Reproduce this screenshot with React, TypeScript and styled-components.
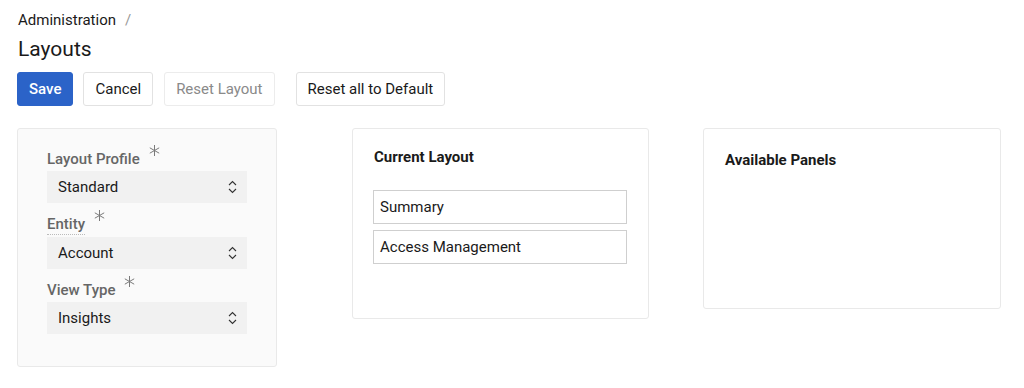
import React from "react";
import styled, { createGlobalStyle } from "styled-components";

const GlobalStyle = createGlobalStyle`
  body {
    margin: 0;
    background: #ffffff;
    font-family: Roboto, "Liberation Sans", Arial, sans-serif;
    color: #1a1a1a;
  }
`;

const Page = styled.div`
  padding: 10px 17px 0 17px;
`;

const Breadcrumb = styled.div`
  display: flex;
  gap: 9px;
  font-size: 15px;
  line-height: 20px;
  padding-left: 1px;
`;

const Slash = styled.span`
  color: #999;
`;

const Title = styled.h1`
  margin: 5px 0 0 0;
  font-size: 21px;
  font-weight: 400;
  line-height: 28px;
  padding-left: 1px;
`;

const Toolbar = styled.div`
  display: flex;
  align-items: center;
  margin-top: 9px;
`;

const Button = styled.button<{ $primary?: boolean; $gap?: number }>`
  height: 34px;
  padding: 0 11px;
  margin-right: ${(p) => p.$gap ?? 10}px;
  border-radius: 3px;
  font-family: Roboto, "Liberation Sans", Arial, sans-serif;
  font-size: 15px;
  font-weight: ${(p) => (p.$primary ? 500 : 400)};
  background: ${(p) => (p.$primary ? "#2b63c8" : "#ffffff")};
  color: ${(p) => (p.$primary ? "#ffffff" : "#1a1a1a")};
  border: 1px solid ${(p) => (p.$primary ? "#2b63c8" : "#e2e2e2")};
  &:disabled {
    color: #8a8a8a;
    border-color: #ececec;
  }
`;

const Panels = styled.div`
  display: flex;
  align-items: flex-start;
  margin-top: 22px;
`;

const Card = styled.div<{ $width: number; $height: number; $muted?: boolean; $offset?: number }>`
  box-sizing: border-box;
  width: ${(p) => p.$width}px;
  height: ${(p) => p.$height}px;
  margin-left: ${(p) => p.$offset ?? 0}px;
  background: ${(p) => (p.$muted ? "#fafafa" : "#ffffff")};
  border: 1px solid #e9e9e9;
  border-radius: 3px;
`;

const FormBody = styled.div`
  padding: 9px 29px 0 29px;
`;

const Label = styled.div`
  display: flex;
  align-items: flex-start;
  padding-top: 12px;
  margin-bottom: 2px;
  font-size: 15px;
  line-height: 20px;
  font-weight: 500;
  color: #666666;
`;

const LabelText = styled.span<{ $dotted?: boolean }>`
  border-bottom: ${(p) => (p.$dotted ? "1px dotted #bbb" : "none")};
  line-height: 19px;
`;

const Required = styled.span`
  display: inline-flex;
  margin-left: 9px;
  margin-top: -5px;
`;

const Select = styled.div`
  display: flex;
  align-items: center;
  justify-content: space-between;
  width: 200px;
  height: 32px;
  box-sizing: border-box;
  padding: 0 10px 0 11px;
  background: #f1f1f1;
  font-size: 15px;
  color: #1a1a1a;
`;

const CardTitle = styled.div<{ $top: number }>`
  padding: ${(p) => p.$top}px 21px 0 21px;
  font-size: 15px;
  font-weight: 700;
  line-height: 20px;
`;

const ItemList = styled.div`
  display: flex;
  flex-direction: column;
  gap: 6px;
  padding: 23px 21px 0 20px;
`;

const Item = styled.div`
  height: 34px;
  box-sizing: border-box;
  display: flex;
  align-items: center;
  padding: 0 6px;
  border: 1px solid #cfcfcf;
  font-size: 15px;
  color: #1a1a1a;
`;

const Asterisk = () => (
  <Required>
    <svg width="11" height="11" viewBox="0 0 11 11" stroke="#7a7a7a" strokeWidth="1" fill="none">
      <line x1="5.5" y1="0" x2="5.5" y2="11" />
      <line x1="0.8" y1="2.8" x2="10.2" y2="8.2" />
      <line x1="0.8" y1="8.2" x2="10.2" y2="2.8" />
    </svg>
  </Required>
);

const UpDown = () => (
  <svg width="9" height="14" viewBox="0 0 9 14" fill="none" stroke="#333" strokeWidth="1.1">
    <polyline points="1,5 4.5,1.5 8,5" />
    <polyline points="1,9 4.5,12.5 8,9" />
  </svg>
);

const fields = [
  { label: "Layout Profile", value: "Standard" },
  { label: "Entity", value: "Account", dotted: true },
  { label: "View Type", value: "Insights" },
];

export default function App() {
  return (
    <>
      <GlobalStyle />
      <Page>
        <Breadcrumb>
          <span>Administration</span>
          <Slash>/</Slash>
        </Breadcrumb>
        <Title>Layouts</Title>
        <Toolbar>
          <Button $primary>Save</Button>
          <Button $gap={11}>Cancel</Button>
          <Button $gap={21} disabled>
            Reset Layout
          </Button>
          <Button>Reset all to Default</Button>
        </Toolbar>
        <Panels>
          <Card $width={260} $height={239} $muted>
            <FormBody>
              {fields.map((f) => (
                <div key={f.label}>
                  <Label>
                    <LabelText $dotted={f.dotted}>{f.label}</LabelText>
                    <Asterisk />
                  </Label>
                  <Select>
                    <span>{f.value}</span>
                    <UpDown />
                  </Select>
                </div>
              ))}
            </FormBody>
          </Card>
          <Card $width={297} $height={191} $offset={75}>
            <CardTitle $top={18}>Current Layout</CardTitle>
            <ItemList>
              <Item>Summary</Item>
              <Item>Access Management</Item>
            </ItemList>
          </Card>
          <Card $width={298} $height={181} $offset={54}>
            <CardTitle $top={21}>Available Panels</CardTitle>
          </Card>
        </Panels>
      </Page>
    </>
  );
}
